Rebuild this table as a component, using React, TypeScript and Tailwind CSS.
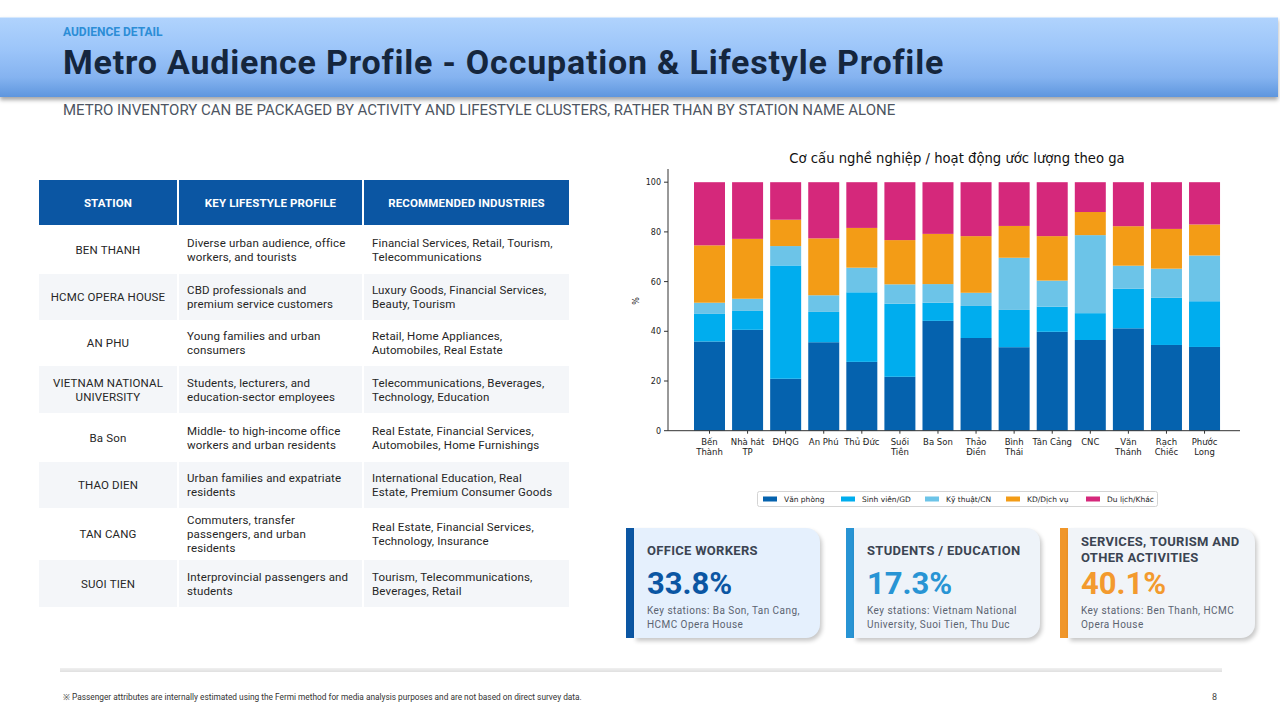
import React from "react";

const rows = [
  { h: "h-[49px]", bg: "bg-white", s: ["BEN THANH"], p: ["Diverse urban audience, office", "workers, and tourists"], r: ["Financial Services, Retail, Tourism,", "Telecommunications"] },
  { h: "h-[46px]", bg: "bg-[#f4f6f9]", s: ["HCMC OPERA HOUSE"], p: ["CBD professionals and", "premium service customers"], r: ["Luxury Goods, Financial Services,", "Beauty, Tourism"] },
  { h: "h-[46px]", bg: "bg-white", s: ["AN PHU"], p: ["Young families and urban", "consumers"], r: ["Retail, Home Appliances,", "Automobiles, Real Estate"] },
  { h: "h-[47px]", bg: "bg-[#f4f6f9]", s: ["VIETNAM NATIONAL", "UNIVERSITY"], p: ["Students, lecturers, and", "education-sector employees"], r: ["Telecommunications, Beverages,", "Technology, Education"] },
  { h: "h-[49px]", bg: "bg-white", s: ["Ba Son"], p: ["Middle- to high-income office", "workers and urban residents"], r: ["Real Estate, Financial Services,", "Automobiles, Home Furnishings"] },
  { h: "h-[46px]", bg: "bg-[#f4f6f9]", s: ["THAO DIEN"], p: ["Urban families and expatriate", "residents"], r: ["International Education, Real", "Estate, Premium Consumer Goods"] },
  { h: "h-[52px]", bg: "bg-white", s: ["TAN CANG"], p: ["Commuters, transfer", "passengers, and urban", "residents"], r: ["Real Estate, Financial Services,", "Technology, Insurance"] },
  { h: "h-[47px]", bg: "bg-[#f4f6f9]", s: ["SUOI TIEN"], p: ["Interprovincial passengers and", "students"], r: ["Tourism, Telecommunications,", "Beverages, Retail"] },
];

// cumulative tops: Văn phòng, Sinh viên, Kỹ thuật, KD/Dịch vụ (rest = Du lịch/Khác)
const stations = [
  { l: ["Bến", "Thành"], v: [35.9, 47.0, 51.5, 74.6] },
  { l: ["Nhà hát", "TP"], v: [40.6, 48.2, 53.1, 77.2] },
  { l: ["ĐHQG"], v: [20.9, 66.5, 74.3, 84.9] },
  { l: ["An Phú"], v: [35.6, 47.8, 54.5, 77.4] },
  { l: ["Thủ Đức"], v: [27.7, 55.7, 65.6, 81.6] },
  { l: ["Suối", "Tiên"], v: [21.7, 51.1, 58.9, 76.7] },
  { l: ["Ba Son"], v: [44.2, 51.5, 59.0, 79.2] },
  { l: ["Thảo", "Điền"], v: [37.3, 50.2, 55.5, 78.3] },
  { l: ["Bình", "Thái"], v: [33.6, 48.6, 69.6, 82.4] },
  { l: ["Tân Cảng"], v: [39.8, 49.9, 60.4, 78.3] },
  { l: ["CNC"], v: [36.5, 47.3, 78.7, 88.0] },
  { l: ["Văn", "Thánh"], v: [41.2, 57.1, 66.4, 82.3] },
  { l: ["Rạch", "Chiếc"], v: [34.5, 53.5, 65.2, 81.2] },
  { l: ["Phước", "Long"], v: [33.7, 52.1, 70.5, 83.0] },
];

const colors = ["#0562ae", "#00adee", "#6cc4e8", "#f39c16", "#d5287b"];
const legend = [
  { x: 763, t: "Văn phòng" },
  { x: 841, t: "Sinh viên/GD" },
  { x: 925, t: "Kỹ thuật/CN" },
  { x: 1006, t: "KD/Dịch vụ" },
  { x: 1086, t: "Du lịch/Khác" },
];

const Y0 = 430.7;
const K = 2.485;
const y = (v: number) => Y0 - v * K;

function Chart() {
  return (
    <svg width="630" height="375" viewBox="620 140 630 375" style={{ fontFamily: "'DejaVu Sans', sans-serif" }}>
      <text x="957" y="163" textAnchor="middle" fontSize="13.2" fill="#111">
        Cơ cấu nghề nghiệp / hoạt động ước lượng theo ga
      </text>
      {stations.map((s, i) => {
        const cx = 709.5 + i * 38.08;
        const tops = [...s.v, 100];
        return (
          <g key={i}>
            {tops.map((t, j) => {
              const b = j === 0 ? 0 : tops[j - 1];
              return <rect key={j} x={cx - 15.5} y={y(t)} width="31" height={(t - b) * K} fill={colors[j]} />;
            })}
            {s.l.map((ln, k) => (
              <text key={k} x={cx} y={444.5 + k * 10} textAnchor="middle" fontSize="8.5" fill="#222">
                {ln}
              </text>
            ))}
          </g>
        );
      })}
      <line x1="668" y1="169" x2="668" y2={Y0} stroke="#333" strokeWidth="1" />
      <line x1="668" y1={Y0} x2="1240" y2={Y0} stroke="#333" strokeWidth="1" />
      {[0, 20, 40, 60, 80, 100].map((t) => (
        <g key={t}>
          <line x1="664" y1={y(t)} x2="668" y2={y(t)} stroke="#333" strokeWidth="1" />
          <text x="661" y={y(t) + 3} textAnchor="end" fontSize="8" fill="#222">
            {t}
          </text>
        </g>
      ))}
      {stations.map((_, i) => (
        <line key={i} x1={709.5 + i * 38.08} y1={Y0} x2={709.5 + i * 38.08} y2={Y0 + 3} stroke="#333" strokeWidth="1" />
      ))}
      <text x="639" y="301" textAnchor="middle" fontSize="8" fill="#222" transform="rotate(-90 639 301)">
        %
      </text>
      <rect x="757.5" y="491.5" width="400" height="15" rx="2" fill="#fff" stroke="#d4d4d4" />
      {legend.map((l, i) => (
        <g key={i}>
          <rect x={l.x} y="496.5" width="14" height="5" fill={colors[i]} />
          <text x={l.x + 21} y="502" fontSize="7.5" fill="#222">
            {l.t}
          </text>
        </g>
      ))}
    </svg>
  );
}

function Card({ bar, bg, color, title, value, keys, ml, w, pt, gap }: {
  bar: string; bg: string; color: string; title: string[]; value: string; keys: string[]; ml: string; w: string; pt: string; gap: string;
}) {
  return (
    <div className={`flex h-[110px] ${ml} ${w}`}>
      <div className={`w-[8px] shrink-0 ${bar}`} />
      <div className={`flex-1 rounded-r-[14px] pl-[13px] shadow-[2px_3px_4px_rgba(0,0,0,0.22)] ${bg} ${pt}`}>
        <div className={`whitespace-nowrap text-[13px] font-bold leading-[16px] tracking-[0.3px] text-[#3b4452] ${gap}`}>
          {title.map((t) => (
            <div key={t}>{t}</div>
          ))}
        </div>
        <div className={`text-[31px] font-bold leading-[34px] ${color}`}>{value}</div>
        <div className="mt-[3px] whitespace-nowrap text-[10px] leading-[14px] tracking-[0.45px] text-[#5b6370]">
          {keys.map((k) => (
            <div key={k}>{k}</div>
          ))}
        </div>
      </div>
    </div>
  );
}

export default function App() {
  return (
    <div className="h-[720px] w-[1280px] overflow-hidden bg-white font-['Roboto',sans-serif]">
      <div className="mt-[17px] h-[80px] w-[1278px] border-t border-[#d5e8fd] bg-[linear-gradient(to_bottom,#b0d3fd_0%,#9cc5f9_40%,#85b3f0_75%,#5e96de_100%)] px-[63px] shadow-[0_3px_4px_rgba(0,0,0,0.35)]">
        <div className="pt-[9px] text-[12px] font-bold leading-[11px] text-[#2c8dd6]">AUDIENCE DETAIL</div>
        <div className="mt-[4px] whitespace-nowrap text-[34px] font-bold leading-[40px] tracking-[0.8px] text-[#15263d]">
          Metro Audience Profile - Occupation &amp; Lifestyle Profile
        </div>
      </div>
      <div className="mt-[4px] whitespace-nowrap pl-[63px] text-[15px] leading-[18px] text-[#4d5562]">
        METRO INVENTORY CAN BE PACKAGED BY ACTIVITY AND LIFESTYLE CLUSTERS, RATHER THAN BY STATION NAME ALONE
      </div>

      <div className="flex items-start">
        <div className="ml-[39px] mt-[61px] w-[530px] text-[11.5px] leading-[14px] tracking-[0.15px] text-[#262626]">
          <div className="flex h-[45px] bg-[#0b56a3] text-[11.5px] font-bold text-white">
            <div className="flex w-[138px] items-center justify-center">STATION</div>
            <div className="flex w-[185px] items-center justify-center border-l-2 border-white">KEY LIFESTYLE PROFILE</div>
            <div className="flex flex-1 items-center justify-center border-l-2 border-white">RECOMMENDED INDUSTRIES</div>
          </div>
          {rows.map((r) => (
            <div key={r.s[0]} className={`flex ${r.h} ${r.bg}`}>
              <div className="flex w-[138px] flex-col items-center justify-center text-center">
                {r.s.map((t) => (
                  <div key={t}>{t}</div>
                ))}
              </div>
              <div className="flex w-[185px] flex-col justify-center whitespace-nowrap border-l-2 border-white pl-[8px]">
                {r.p.map((t) => (
                  <div key={t}>{t}</div>
                ))}
              </div>
              <div className="flex flex-1 flex-col justify-center whitespace-nowrap border-l-2 border-white pl-[8px]">
                {r.r.map((t) => (
                  <div key={t}>{t}</div>
                ))}
              </div>
            </div>
          ))}
        </div>

        <div className="ml-[51px] mt-[21px] w-[640px]">
          <Chart />
          <div className="mt-[13px] flex">
            <Card
              ml="ml-[6px]" w="w-[194px]" bar="bg-[#0b56a3]" bg="bg-[#e5f0fd]" color="text-[#0b56a3]"
              pt="pt-[15px]" gap="mb-[8px]" title={["OFFICE WORKERS"]} value="33.8%"
              keys={["Key stations: Ba Son, Tan Cang,", "HCMC Opera House"]}
            />
            <Card
              ml="ml-[26px]" w="w-[194px]" bar="bg-[#2894d4]" bg="bg-[#eef3f9]" color="text-[#2894d4]"
              pt="pt-[15px]" gap="mb-[8px]" title={["STUDENTS / EDUCATION"]} value="17.3%"
              keys={["Key stations: Vietnam National", "University, Suoi Tien, Thu Duc"]}
            />
            <Card
              ml="ml-[20px]" w="w-[195px]" bar="bg-[#f0962a]" bg="bg-[#f1f4f8]" color="text-[#f39a2e]"
              pt="pt-[6px]" gap="mb-[1px]" title={["SERVICES, TOURISM AND", "OTHER ACTIVITIES"]} value="40.1%"
              keys={["Key stations: Ben Thanh, HCMC", "Opera House"]}
            />
          </div>
        </div>
      </div>

      <div className="ml-[60px] mt-[30px] h-[4px] w-[1162px] bg-[linear-gradient(to_bottom,#f0f0f0,#e0e0e0)]" />
      <div className="mt-[20px] flex w-[1217px] items-center justify-between pl-[63px]">
        <span className="text-[8.3px] leading-[10px] text-[#333]">
          ※ Passenger attributes are internally estimated using the Fermi method for media analysis purposes and are not based on direct survey data.
        </span>
        <span className="text-[9px] leading-[10px] text-[#444]">8</span>
      </div>
    </div>
  );
}
